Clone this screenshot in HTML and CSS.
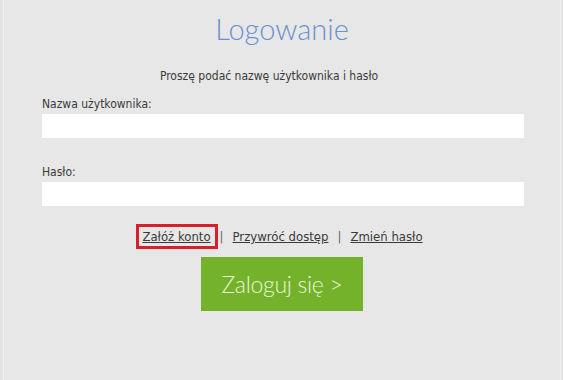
FILE: index.html
```html
<!DOCTYPE html>
<html lang="pl">
<head>
    <meta charset="UTF-8">
    <meta name="viewport" content="width=device-width, initial-scale=1.0">
    <title>Logowanie</title>
    <link rel="stylesheet" href="styles.css">
</head>
<body>
    <div class="panel">
        <h1 class="title">Logowanie</h1>
        <p class="intro">Proszę podać nazwę użytkownika i hasło</p>
        <form class="login">
            <label class="label" for="user">Nazwa użytkownika:</label>
            <input class="field" type="text" id="user">
            <label class="label label-pass" for="pass">Hasło:</label>
            <input class="field" type="password" id="pass">
            <div class="links">
                <a href="#" class="link marked">Załóż konto</a>
                <span class="sep">|</span>
                <a href="#" class="link">Przywróć dostęp</a>
                <span class="sep">|</span>
                <a href="#" class="link">Zmień hasło</a>
            </div>
            <div class="actions">
                <button type="button" class="submit">Zaloguj się &gt;</button>
            </div>
        </form>
    </div>
</body>
</html>
```

FILE: styles.css
```css
* { margin: 0; padding: 0; box-sizing: border-box; }
html, body { height: 100%; }
body {
    background-color: #e2e2e2;
    font-family: "DejaVu Sans Condensed", "DejaVu Sans", sans-serif;
    font-stretch: condensed;
    font-size: 12px;
    color: #333;
}
.panel {
    margin-left: 3px;
    width: 558px;
    height: 100%;
    background-color: #e7e7e7;
    border-left: 1px solid #efefef;
    border-right: 1px solid #efefef;
    padding-top: 11px;
}
.title {
    font-family: "Lato", sans-serif;
    font-weight: 300;
    font-size: 29px;
    line-height: 36px;
    color: #6b90cf;
    text-align: center;
}
.intro {
    margin-top: 21px;
    padding-right: 26px;
    line-height: 16px;
    text-align: center;
    color: #3a3a3a;
}
.login {
    margin: 12px 0 0 38px;
    width: 482px;
    display: flex;
    flex-direction: column;
}
.label {
    line-height: 16px;
    margin-bottom: 2px;
    color: #3a3a3a;
}
.label-pass {
    margin-top: 26px;
}
.field {
    height: 24px;
    border: 0;
    background-color: #fff;
    outline: none;
}
.links {
    margin-top: 21px;
    padding-right: 4px;
    display: flex;
    justify-content: center;
    align-items: center;
    font-size: 13px;
    line-height: 17px;
}
.link {
    color: #3a3a3a;
    text-decoration: underline;
}
.marked {
    display: inline-block;
    padding: 1px 4px 1px 3px;
    outline: 3px solid #d8202a;
    margin-right: -4px;
}
.sep {
    color: #666;
    margin: 0 9px;
}
.actions {
    margin-top: 11px;
    padding-right: 2px;
    display: flex;
    justify-content: center;
}
.submit {
    width: 162px;
    height: 54px;
    border: 0;
    background-color: #73b22a;
    color: #eaf6d8;
    font-family: "Lato", sans-serif;
    font-weight: 300;
    font-size: 23px;
    letter-spacing: -0.3px;
    cursor: pointer;
}
```
